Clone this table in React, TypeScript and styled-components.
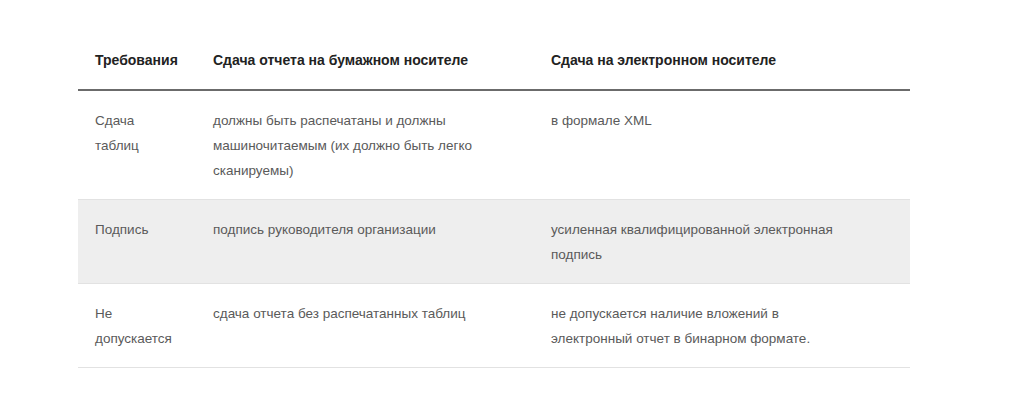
import styled, { createGlobalStyle } from "styled-components";

const Global = createGlobalStyle`
    html, body {
        margin: 0;
        padding: 0;
        background: #ffffff;
    }
    body {
        font-family: "Liberation Sans", Arial, sans-serif;
    }
`

const Page = styled.div`
    padding: 36px 0 0 78px;
`
const Table = styled.table`
    width: 832px;
    border-collapse: collapse;
    table-layout: fixed;
    font-size: 13.5px;
    line-height: 25px;
`
const HeadCell = styled.th<{ $w: number }>`
    box-sizing: border-box;
    width: ${p => p.$w}px;
    text-align: left;
    font-weight: 700;
    font-size: 14px;
    color: #222222;
    padding: 12px 17px 16px;
    border-bottom: 2px solid #6b6b6b;
    vertical-align: top;
`
const Row = styled.tr<{ $shade?: boolean }>`
    background: ${p => (p.$shade ? "#eeeeee" : "#ffffff")};
    border-bottom: 1px solid #e2e2e2;
`
const Cell = styled.td`
    padding: 17px 17px 16px;
    color: #5a5a5a;
    vertical-align: top;
    &:nth-child(2) { padding-right: 40px; }
    &:last-child { padding-right: 70px; }
`

const cols = [
    { title: "Требования", w: 118 },
    { title: "Сдача отчета на бумажном носителе", w: 338 },
    { title: "Сдача на электронном носителе", w: 376 },
];

const rows = [
    [
        "Сдача таблиц",
        "должны быть распечатаны и должны машиночитаемым (их должно быть легко сканируемы)",
        "в формале XML",
    ],
    [
        "Подпись",
        "подпись руководителя организации",
        "усиленная квалифицированной электронная подпись",
    ],
    [
        "Не допускается",
        "сдача отчета без распечатанных таблиц",
        "не допускается наличие вложений в электронный отчет в бинарном формате.",
    ],
];

export default function App() {
    return (
        <Page>
            <Global />
            <Table>
                <thead>
                    <tr>
                        {cols.map(c => (
                            <HeadCell key={c.title} $w={c.w}>{c.title}</HeadCell>
                        ))}
                    </tr>
                </thead>
                <tbody>
                    {rows.map((r, i) => (
                        <Row key={`row${i}`} $shade={i === 1}>
                            {r.map((t, j) => (
                                <Cell key={`cell${i}-${j}`}>{t}</Cell>
                            ))}
                        </Row>
                    ))}
                </tbody>
            </Table>
        </Page>
    )
}
